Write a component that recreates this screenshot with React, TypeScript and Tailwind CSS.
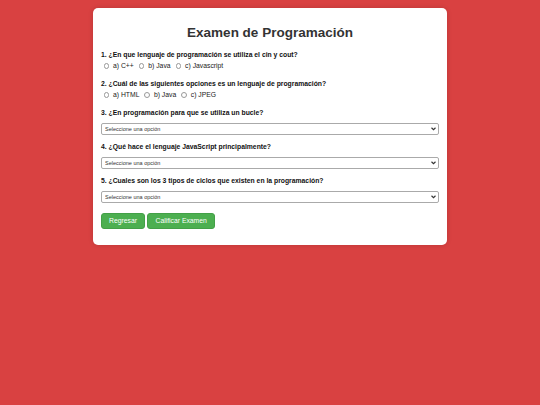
import { useState } from 'react';

const radioQuestions = [
  {
    name: 'q1',
    label: '1. ¿En que lenguaje de programación se utiliza el cin y cout?',
    options: ['a) C++', 'b) Java', 'c) Javascript'],
  },
  {
    name: 'q2',
    label: '2. ¿Cuál de las siguientes opciones es un lenguaje de programación?',
    options: ['a) HTML', 'b) Java', 'c) JPEG'],
  },
];

const selectQuestions = [
  { name: 'q3', label: '3. ¿En programación para que se utiliza un bucle?' },
  { name: 'q4', label: '4. ¿Qué hace el lenguaje JavaScript principalmente?' },
  { name: 'q5', label: '5. ¿Cuales son los 3 tipos de ciclos que existen en la programación?' },
];

export default function App() {
  const [answers, setAnswers] = useState<Record<string, string>>({});

  return (
    <div className="min-h-[405px] bg-[#d94141] pt-2 font-['Liberation_Sans',Arial,sans-serif]">
      <div className="mx-auto w-[354px] rounded-[5px] bg-white px-2 pb-4 pt-4 shadow-[0_0_5px_rgba(0,0,0,0.15)]">
        <h1 className="mb-[8px] text-center text-[13.5px] font-bold leading-[18px] text-[#333]">
          Examen de Programación
        </h1>

        {radioQuestions.map((q) => (
          <div key={q.name} className="mb-[9px]">
            <p className="mb-[3px] text-[6.8px] font-bold leading-[9px] text-[#111]">{q.label}</p>
            <div className="flex h-[8px] items-center gap-[5px] pl-[2.5px] text-[6.8px] leading-[8px] text-[#222]">
              {q.options.map((opt) => (
                <label key={opt} className="flex items-center gap-[4px]">
                  <input
                    type="radio"
                    name={q.name}
                    className="m-0 h-[5.5px] w-[5.5px] appearance-none rounded-full border-[0.8px] border-[#999] bg-white checked:border-[2px] checked:border-[#4caf50]"
                    checked={answers[q.name] === opt}
                    onChange={() => setAnswers({ ...answers, [q.name]: opt })}
                  />
                  {opt}
                </label>
              ))}
            </div>
          </div>
        ))}

        {selectQuestions.map((q) => (
          <div key={q.name} className="mb-[7px]">
            <p className="mb-[6px] text-[6.8px] font-bold leading-[9px] text-[#111]">{q.label}</p>
            <div className="relative h-[12px]">
              <select
                className="block h-[12px] w-full appearance-none rounded-[2px] border border-[#aaa] bg-white px-[3px] py-0 text-[5.5px] leading-[10px] text-[#333]"
                value={answers[q.name] ?? ''}
                onChange={(e) => setAnswers({ ...answers, [q.name]: e.target.value })}
              >
                <option value="">Seleccione una opción</option>
              </select>
              <svg
                className="pointer-events-none absolute right-[3px] top-[4px] h-[4px] w-[5px]"
                viewBox="0 0 10 8"
                fill="none"
                stroke="#333"
                strokeWidth={2.2}
              >
                <path d="M1 1.5l4 4 4-4" />
              </svg>
            </div>
          </div>
        ))}

        <div className="mt-[10px] flex gap-[2.5px]">
          <button className="h-[16px] rounded-[3px] border-[0.5px] border-[#43a047] bg-[#4caf50] px-[7px] text-[6.8px] text-white">
            Regresar
          </button>
          <button className="h-[16px] rounded-[3px] border-[0.5px] border-[#43a047] bg-[#4caf50] px-[7px] text-[6.8px] text-white">
            Calificar Examen
          </button>
        </div>
      </div>
    </div>
  );
}
